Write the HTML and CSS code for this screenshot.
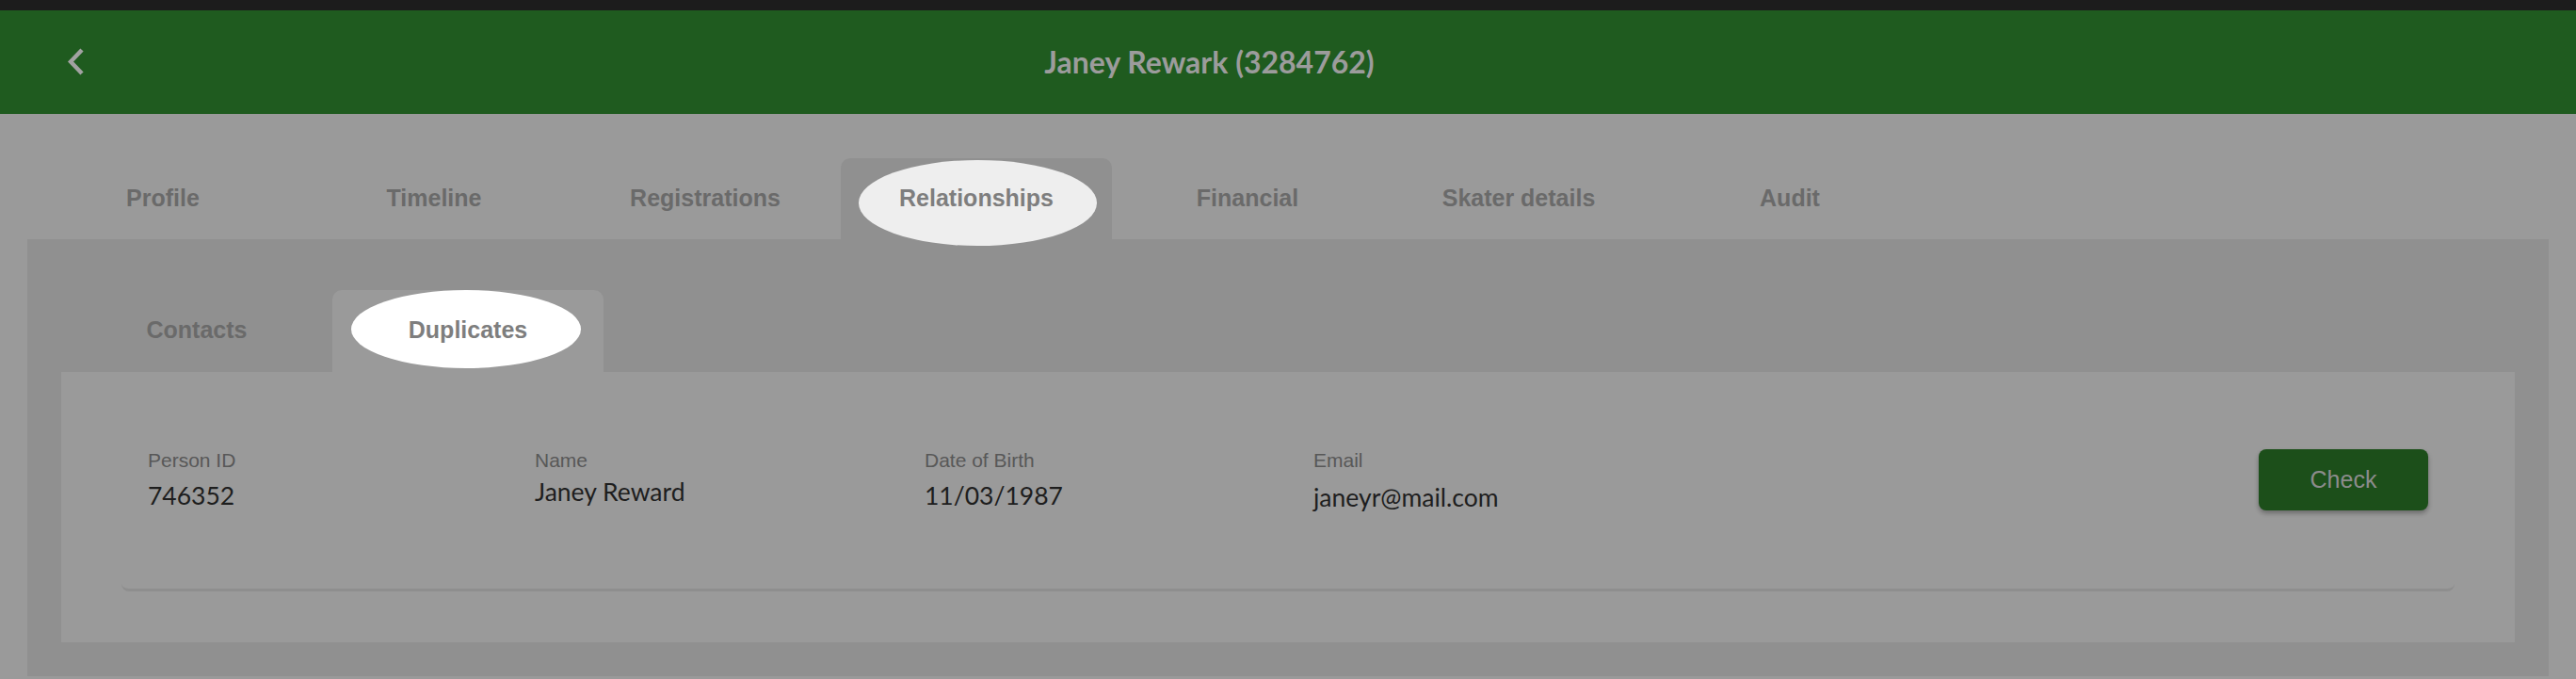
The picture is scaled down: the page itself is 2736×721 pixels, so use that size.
FILE: index.html
```html
<!doctype html>
<html lang="en">
    <head>
        <meta charset="UTF-8" />
        <meta name="viewport" content="width=device-width, initial-scale=1.0" />
        <title>Janey Rewark (3284762)</title>
        <link rel="stylesheet" href="styles.css">
    </head>
    <body>
        <div class="topbar"></div>

        <header class="header">
            <button class="back" aria-label="Back">
                <svg width="20" height="30" viewBox="0 0 20 30">
                    <polyline points="15,2 3,14.5 15,27" />
                </svg>
            </button>
            <h1 class="title">Janey Rewark (3284762)</h1>
        </header>

        <main class="page">
            <nav class="tabs">
                <a class="tab">Profile</a>
                <a class="tab">Timeline</a>
                <a class="tab">Registrations</a>
                <a class="tab active highlight-soft"><span>Relationships</span></a>
                <a class="tab">Financial</a>
                <a class="tab">Skater details</a>
                <a class="tab">Audit</a>
            </nav>

            <section class="panel">
                <nav class="tabs subtabs">
                    <a class="tab">Contacts</a>
                    <a class="tab active highlight"><span>Duplicates</span></a>
                </nav>

                <div class="subpanel">
                    <div class="dup-row">
                        <div class="field">
                            <div class="label">Person ID</div>
                            <div class="value">746352</div>
                        </div>
                        <div class="field">
                            <div class="label">Name</div>
                            <div class="value value-name">Janey Reward</div>
                        </div>
                        <div class="field">
                            <div class="label">Date of Birth</div>
                            <div class="value">11/03/1987</div>
                        </div>
                        <div class="field">
                            <div class="label">Email</div>
                            <div class="value value-email">janeyr@mail.com</div>
                        </div>
                        <button class="check">Check</button>
                    </div>
                </div>
            </section>
        </main>
    </body>
</html>
```

FILE: styles.css
```css
* {
    box-sizing: border-box;
}
html,
body {
    height: 100%;
    overflow: hidden;
}
body {
    margin: 0;
    background-color: #9a9a9a;
    font-family: "Liberation Sans", Arial, sans-serif;
}
.topbar {
    height: 11px;
    background-color: #1c1c1c;
}
.header {
    display: flex;
    align-items: center;
    height: 110px;
    padding: 0 259px 0 72px;
    background-color: #1f5b1f;
}
.back {
    display: flex;
    padding: 0;
    border: none;
    background: none;
    cursor: pointer;
}
.back polyline {
    fill: none;
    stroke: #a2a2a2;
    stroke-width: 4.5;
}
.title {
    flex: 1;
    margin: 0;
    text-align: center;
    font-family: Lato, "Open Sans", sans-serif;
    font-weight: 700;
    font-size: 32px;
    line-height: 40px;
    color: #9c9c9c;
}
.page {
    padding: 47px 29px 0;
}
.tabs {
    display: flex;
}
.tab {
    position: relative;
    display: flex;
    align-items: center;
    justify-content: center;
    width: 288px;
    height: 86px;
    padding-bottom: 2px;
    font-weight: 700;
    font-size: 25px;
    color: #6a6a6a;
    border-radius: 10px 10px 0 0;
    cursor: pointer;
}
.tab span {
    position: relative;
}
.tab.active {
    background-color: #909090;
    color: #7e7e7e;
}
/* highlight marks drawn over the active tabs */
.highlight-soft::before,
.highlight::before {
    content: "";
    position: absolute;
    border-radius: 50%;
}
.highlight-soft::before {
    left: 19px;
    top: 2px;
    width: 253px;
    height: 91px;
    background-color: #eeeeee;
}
.highlight::before {
    left: 20px;
    top: 0;
    width: 244px;
    height: 83px;
    background-color: #ffffff;
}
.panel {
    padding: 54px 36px 36px;
    background-color: #909090;
}
.subtabs .tab {
    height: 87px;
}
.subtabs .tab.active {
    background-color: #9a9a9a;
}
.subpanel {
    padding: 54px 64px;
    background-color: #9a9a9a;
}
.dup-row {
    display: grid;
    grid-template-columns: 411px 414px 413px 1fr auto;
    align-items: start;
    height: 179px;
    padding: 28px 28px 0;
    border-bottom: 3px solid #8e8e8e;
    border-radius: 8px;
}
.label {
    font-size: 21px;
    line-height: 24px;
    color: #585858;
}
.value {
    margin-top: 10px;
    font-family: Lato, "Open Sans", sans-serif;
    font-size: 26.5px;
    line-height: 30px;
    color: #1e1e1e;
}
.value-name {
    margin-top: 6px;
}
.value-email {
    margin-top: 12px;
}
.check {
    width: 180px;
    height: 65px;
    border: none;
    border-radius: 8px;
    background-color: #1c4f1a;
    color: #8c8c8c;
    font-family: "Liberation Sans", Arial, sans-serif;
    font-size: 25px;
    box-shadow: 0 3px 5px rgba(0, 0, 0, 0.3);
    cursor: pointer;
}
```
